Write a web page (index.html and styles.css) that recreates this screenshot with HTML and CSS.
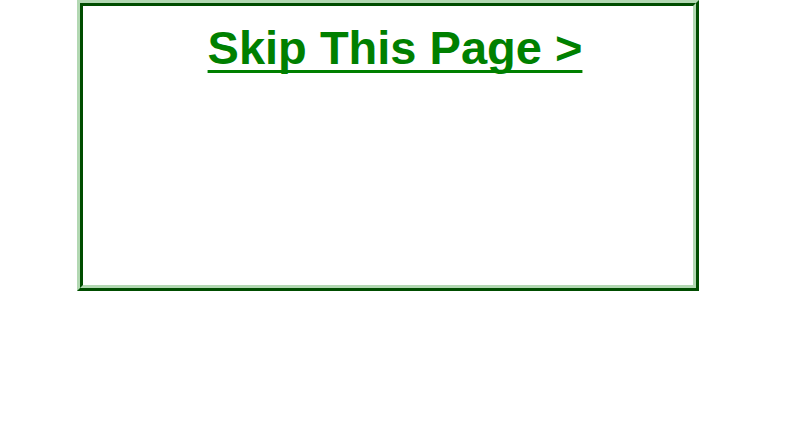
FILE: index.html
```html
<!DOCTYPE html>
<html lang="en">
<head>
    <meta charset="UTF-8">
    <title>Skip This Page</title>
    <link rel="stylesheet" href="styles.css">
</head>
<body>
    <div class="frame">
        <div class="frame-inner">
            <a href="#" class="skip-link">Skip This Page &gt;</a>
        </div>
    </div>
</body>
</html>
```

FILE: styles.css
```css
body {
    margin: 0;
    background-color: #ffffff;
    font-family: 'Liberation Sans', Arial, sans-serif;
}

.frame {
    box-sizing: border-box;
    width: 622px;
    height: 291px;
    margin-left: 77px;
    border: 3px solid;
    border-color: #b2d8b2 #004d00 #004d00 #b2d8b2;
}

.frame-inner {
    box-sizing: border-box;
    height: 100%;
    border: 3px solid;
    border-color: #004d00 #b2d8b2 #b2d8b2 #004d00;
    padding: 15px 0 0 14px;
    text-align: center;
}

.skip-link {
    font-size: 47px;
    line-height: 54px;
    font-weight: 700;
    color: #008000;
    text-decoration: underline;
    text-decoration-thickness: 3px;
    text-underline-offset: 6px;
    text-decoration-skip-ink: none;
}
```
